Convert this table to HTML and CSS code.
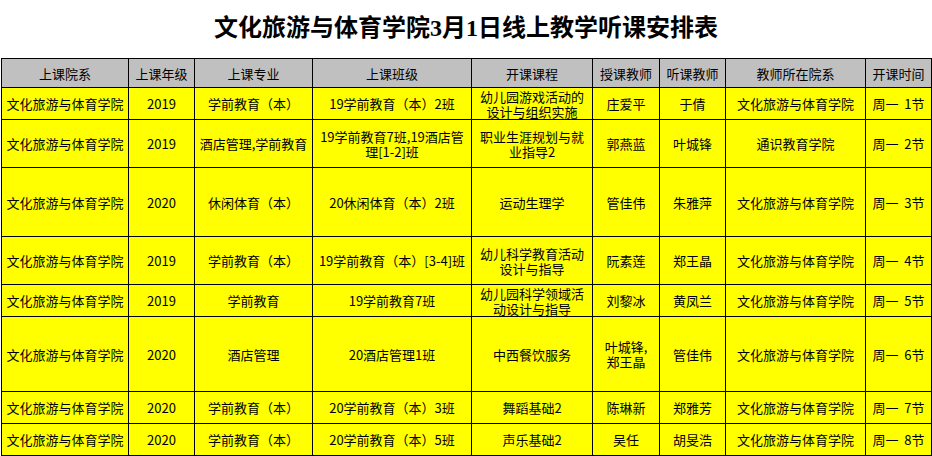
FILE: index.html
```html
<!DOCTYPE html>
<html lang="zh-CN">
<head>
<meta charset="utf-8">
<title>文化旅游与体育学院3月1日线上教学听课安排表</title>
<link rel="stylesheet" href="styles.css">
</head>
<body>
<h1 class="title">文化旅游与体育学院3月1日线上教学听课安排表</h1>
<table class="sched">
  <colgroup>
    <col class="c-dept"><col class="c-year"><col class="c-major"><col class="c-class"><col class="c-course"><col class="c-teacher"><col class="c-listener"><col class="c-tdept"><col class="c-time">
  </colgroup>
  <thead>
    <tr class="h-head">
      <th>上课院系</th><th>上课年级</th><th>上课专业</th><th>上课班级</th><th>开课课程</th><th>授课教师</th><th>听课教师</th><th>教师所在院系</th><th>开课时间</th>
    </tr>
  </thead>
  <tbody>
    <tr class="h-32">
      <td>文化旅游与体育学院</td><td>2019</td><td>学前教育（本）</td><td>19学前教育（本）2班</td><td>幼儿园游戏活动的<br>设计与组织实施</td><td>庄爱平</td><td>于倩</td><td>文化旅游与体育学院</td><td>周一&nbsp; 1节</td>
    </tr>
    <tr class="h-48">
      <td>文化旅游与体育学院</td><td>2019</td><td>酒店管理,学前教育</td><td>19学前教育7班,19酒店管<br>理[1-2]班</td><td>职业生涯规划与就<br>业指导2</td><td>郭燕蓝</td><td>叶城锋</td><td>通识教育学院</td><td>周一&nbsp; 2节</td>
    </tr>
    <tr class="h-69">
      <td>文化旅游与体育学院</td><td>2020</td><td>休闲体育（本）</td><td>20休闲体育（本）2班</td><td>运动生理学</td><td>管佳伟</td><td>朱雅萍</td><td>文化旅游与体育学院</td><td>周一&nbsp; 3节</td>
    </tr>
    <tr class="h-48">
      <td>文化旅游与体育学院</td><td>2019</td><td>学前教育（本）</td><td>19学前教育（本）[3-4]班</td><td>幼儿科学教育活动<br>设计与指导</td><td>阮素莲</td><td>郑王晶</td><td>文化旅游与体育学院</td><td>周一&nbsp; 4节</td>
    </tr>
    <tr class="h-32">
      <td>文化旅游与体育学院</td><td>2019</td><td>学前教育</td><td>19学前教育7班</td><td>幼儿园科学领域活<br>动设计与指导</td><td>刘黎冰</td><td>黄凤兰</td><td>文化旅游与体育学院</td><td>周一&nbsp; 5节</td>
    </tr>
    <tr class="h-75">
      <td>文化旅游与体育学院</td><td>2020</td><td>酒店管理</td><td>20酒店管理1班</td><td>中西餐饮服务</td><td>叶城锋,<br>郑王晶</td><td>管佳伟</td><td>文化旅游与体育学院</td><td>周一&nbsp; 6节</td>
    </tr>
    <tr class="h-32">
      <td>文化旅游与体育学院</td><td>2020</td><td>学前教育（本）</td><td>20学前教育（本）3班</td><td>舞蹈基础2</td><td>陈琳新</td><td>郑雅芳</td><td>文化旅游与体育学院</td><td>周一&nbsp; 7节</td>
    </tr>
    <tr class="h-32">
      <td>文化旅游与体育学院</td><td>2020</td><td>学前教育（本）</td><td>20学前教育（本）5班</td><td>声乐基础2</td><td>吴任</td><td>胡旻浩</td><td>文化旅游与体育学院</td><td>周一&nbsp; 8节</td>
    </tr>
  </tbody>
</table>
</body>
</html>
```
FILE: styles.css
```css
html, body {
  margin: 0;
  padding: 0;
  background: #ffffff;
}
body {
  font-family: "Noto Sans CJK SC", "Liberation Sans", sans-serif;
  color: #000000;
}
.title {
  margin: 0;
  height: 58px;
  display: flex;
  align-items: center;
  justify-content: center;
  padding-bottom: 2px;
  box-sizing: border-box;
  font-family: "Liberation Serif", "Noto Sans CJK SC", serif;
  font-size: 24px;
  font-weight: 700;
  line-height: 1;
  color: #000000;
}
.sched {
  border-collapse: collapse;
  table-layout: fixed;
  width: 931px;
  margin-left: 1px;
  font-size: 13px;
  line-height: 15px;
}
.c-dept { width: 127px; }
.c-year { width: 66px; }
.c-major { width: 118px; }
.c-class { width: 159px; }
.c-course { width: 121px; }
.c-teacher { width: 67px; }
.c-listener { width: 66px; }
.c-tdept { width: 140px; }
.c-time { width: 66px; }
.sched th,
.sched td {
  border: 1px solid #000000;
  padding: 0;
  text-align: center;
  vertical-align: middle;
  white-space: nowrap;
  overflow: hidden;
  font-weight: 400;
}
.sched th {
  background: #c0c0c0;
}
.sched td {
  background: #ffff00;
}
.h-head th { height: 28px; }
.h-32 td { height: 31px; }
.h-48 td { height: 47px; }
.h-69 td { height: 68px; }
.h-75 td { height: 74px; }
```
